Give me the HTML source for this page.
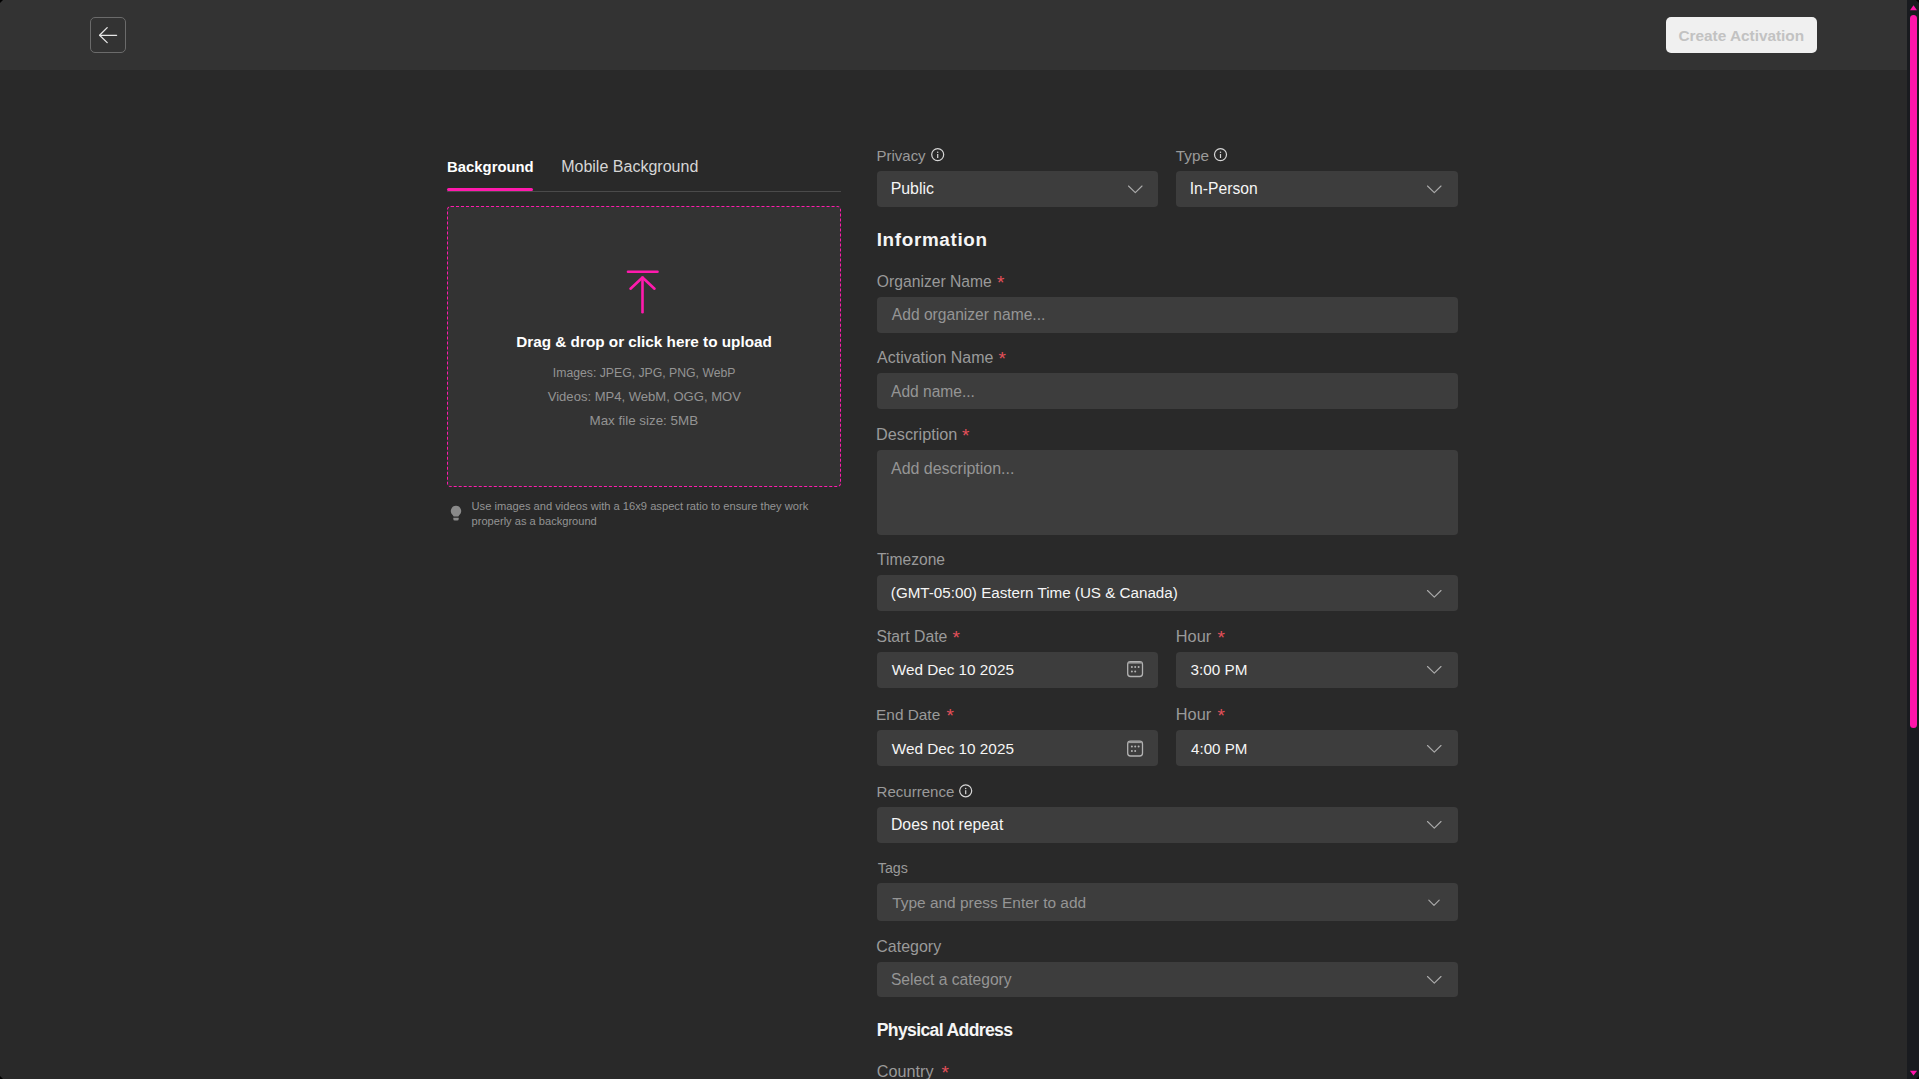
<!DOCTYPE html>
<html>
<head>
<meta charset="utf-8">
<style>
html,body{margin:0;padding:0;background:#292929;}
body{width:1919px;height:1079px;overflow:hidden;background:#292929;position:relative;font-family:"Liberation Sans",sans-serif;}
.abs{position:absolute;}
.t{position:absolute;white-space:nowrap;}
.box{position:absolute;background:#3d3d3d;border-radius:4px;}
svg{position:absolute;left:0;top:0;overflow:visible;}
</style>
</head>
<body>
<div class="abs" style="left:0;top:0;width:1907px;height:70px;background:#333333;"></div>
<!-- back button -->
<div class="abs" style="left:90px;top:17px;width:34px;height:34px;border:1px solid #6b6b6b;border-radius:5px;"></div>
<svg width="1" height="1"><g fill="none" stroke="#e6e6e6" stroke-width="1.3" stroke-linecap="round" stroke-linejoin="round"><path d="M99.6 35.3H116.6"/><path d="M107.2 27.6L99.6 35.3L107.2 42.6"/></g></svg>
<!-- create activation -->
<div class="abs" style="left:1666px;top:17px;width:151px;height:36px;background:#f0f0f0;border-radius:5px;"></div>

<!-- scrollbar -->
<div class="abs" style="left:1907px;top:0;width:12px;height:1079px;background:#191b1f;"></div>
<div class="abs" style="left:1910px;top:15px;width:7px;height:713px;background:#ff14aa;border-radius:3.5px;"></div>
<svg width="1" height="1"><path d="M1913.5 5.3L1917 10.2L1910 10.2Z" fill="#ff14aa"/><path d="M1913.5 1075.6L1917.1 1070.7L1909.9 1070.7Z" fill="#ff14aa"/><path d="M0 1079V1076L3 1079Z" fill="#000"/><path d="M1919 1079V1076L1916 1079Z" fill="#000"/><path d="M0 0H3L0 3Z" fill="#000"/><path d="M1919 0H1916L1919 3Z" fill="#000"/></svg>

<!-- tabs -->
<div class="abs" style="left:447px;top:191px;width:394px;height:1px;background:#4a4a4a;"></div>
<div class="abs" style="left:447px;top:188px;width:86px;height:3px;background:#ff1aad;border-radius:2px;"></div>

<!-- upload -->
<div class="abs" style="left:447px;top:206px;width:392px;height:279px;background:#333333;border:1px dashed #ff1aad;border-radius:4px;"></div>
<svg width="1" height="1"><g fill="none" stroke="#ff1aad" stroke-width="2.6" stroke-linecap="round" stroke-linejoin="round"><path d="M628 271.7H657.5"/><path d="M642.5 277.5V312.3"/><path d="M630.5 288.7L642.5 277.5L654.5 288.7"/></g></svg>
<svg width="1" height="1"><g fill="#8a8a8a"><path d="M456 505.8a5.2 5.2 0 0 1 3.4 9.1c-.7.6-1 1.2-1 1.7h-4.8c0-.5-.3-1.1-1-1.7a5.2 5.2 0 0 1 3.4-9.1z"/><path d="M453.3 517.8h5.4v1.2a1.6 1.6 0 0 1-1.6 1.6h-2.2a1.6 1.6 0 0 1-1.6-1.6z"/></g></svg>

<!-- boxes -->
<div class="box" style="left:877px;top:171px;width:281px;height:36px;"></div>
<div class="box" style="left:1176px;top:171px;width:282px;height:36px;"></div>
<div class="box" style="left:877px;top:297px;width:581px;height:36px;"></div>
<div class="box" style="left:877px;top:373px;width:581px;height:36px;"></div>
<div class="box" style="left:877px;top:450px;width:581px;height:85px;"></div>
<div class="box" style="left:877px;top:575px;width:581px;height:36px;"></div>
<div class="box" style="left:877px;top:652px;width:281px;height:36px;"></div>
<div class="box" style="left:1176px;top:652px;width:282px;height:36px;"></div>
<div class="box" style="left:877px;top:730px;width:281px;height:36px;"></div>
<div class="box" style="left:1176px;top:730px;width:282px;height:36px;"></div>
<div class="box" style="left:877px;top:807px;width:581px;height:36px;"></div>
<div class="box" style="left:877px;top:883px;width:581px;height:38px;"></div>
<div class="box" style="left:877px;top:962px;width:581px;height:35px;"></div>

<!-- info icons -->
<svg width="1" height="1"><g fill="none" stroke="#d6d6d6" stroke-width="1.2"><circle cx="937.7" cy="154.6" r="6"/><circle cx="1220.5" cy="154.6" r="6"/><circle cx="965.7" cy="790.8" r="6"/></g>
<g fill="#d6d6d6"><rect x="937.1" y="154" width="1.2" height="4"/><circle cx="937.7" cy="152.3" r=".75"/>
<rect x="1219.9" y="154" width="1.2" height="4"/><circle cx="1220.5" cy="152.3" r=".75"/>
<rect x="965.1" y="790.2" width="1.2" height="4"/><circle cx="965.7" cy="788.5" r=".75"/></g></svg>

<!-- chevrons -->
<svg width="1" height="1"><g fill="none" stroke="#aaaaaa" stroke-width="1.15" stroke-linecap="round" stroke-linejoin="round">
<path d="M1128.5 186L1135.3 192.7L1142 186"/>
<path d="M1427.5 186L1434.3 192.7L1441 186"/>
<path d="M1427.5 590.5L1434.3 597.2L1441 590.5"/>
<path d="M1427.5 666.5L1434.3 673.2L1441 666.5"/>
<path d="M1427.5 745.5L1434.3 752.2L1441 745.5"/>
<path d="M1427.5 821.5L1434.3 828.2L1441 821.5"/>
<path d="M1428.8 900.2L1434 905.4L1439.2 900.2"/>
<path d="M1427.5 976.5L1434.3 983.2L1441 976.5"/>
</g></svg>
<!-- calendars -->
<svg width="1" height="1"><g fill="none" stroke="#b3b3b3" stroke-width="1.3"><rect x="1127.7" y="661.7" width="14.8" height="14.8" rx="2.8"/><rect x="1127.7" y="741.2" width="14.8" height="14.8" rx="2.8"/></g>
<g fill="#b3b3b3"><rect x="1128.5" y="662" width="13.2" height="1.6" fill="#9a9a9a"/><rect x="1128.5" y="741.5" width="13.2" height="1.6" fill="#9a9a9a"/>
<circle cx="1131.9" cy="667" r="1"/><circle cx="1135.2" cy="667" r="1"/><circle cx="1138.6" cy="667" r="1"/><circle cx="1131.9" cy="671.5" r="1"/><circle cx="1135.2" cy="671.5" r="1"/>
<circle cx="1131.9" cy="746.5" r="1"/><circle cx="1135.2" cy="746.5" r="1"/><circle cx="1138.6" cy="746.5" r="1"/><circle cx="1131.9" cy="751" r="1"/><circle cx="1135.2" cy="751" r="1"/></g></svg>

<div class="t" id="create" style="left:1678.38px;top:26.30px;font-size:15.36px;line-height:20px;color:#c2c2c2;font-weight:700;">Create Activation</div>
<div class="t" id="tab1" style="left:447.08px;top:156.91px;font-size:14.85px;line-height:20px;color:#ffffff;font-weight:700;">Background</div>
<div class="t" id="tab2" style="left:561.13px;top:155.89px;font-size:16.05px;line-height:20px;color:#d6d6d6;">Mobile Background</div>
<div class="t" id="drag" style="left:516.28px;top:332.30px;font-size:15.29px;line-height:20px;color:#ffffff;font-weight:700;">Drag &amp; drop or click here to upload</div>
<div class="t" id="img" style="left:552.82px;top:363.02px;font-size:12.24px;line-height:20px;color:#949494;">Images: JPEG, JPG, PNG, WebP</div>
<div class="t" id="vid" style="left:547.76px;top:387.12px;font-size:13.06px;line-height:20px;color:#949494;">Videos: MP4, WebM, OGG, MOV</div>
<div class="t" id="max" style="left:589.54px;top:411.31px;font-size:13.38px;line-height:20px;color:#949494;">Max file size: 5MB</div>
<div class="t" id="hint1" style="left:471.57px;top:498.89px;font-size:11.17px;line-height:15px;color:#949494;">Use images and videos with a 16x9 aspect ratio to ensure they work</div>
<div class="t" id="hint2" style="left:471.58px;top:513.71px;font-size:11.10px;line-height:15px;color:#949494;">properly as a background</div>
<div class="t" id="privacy" style="left:876.54px;top:146.01px;font-size:14.97px;line-height:20px;color:#9a9a9a;">Privacy</div>
<div class="t" id="public" style="left:890.67px;top:178.92px;font-size:15.88px;line-height:20px;color:#f5f5f5;">Public</div>
<div class="t" id="type" style="left:1175.79px;top:146.01px;font-size:15.30px;line-height:20px;color:#9a9a9a;">Type</div>
<div class="t" id="inperson" style="left:1189.77px;top:179.46px;font-size:15.66px;line-height:20px;color:#f5f5f5;">In-Person</div>
<div class="t" id="info" style="left:876.71px;top:227.50px;font-size:18.85px;line-height:24px;color:#f5f5f5;font-weight:700;letter-spacing:0.664px;">Information</div>
<div class="t" id="org" style="left:876.85px;top:271.83px;font-size:15.68px;line-height:20px;color:#9a9a9a;">Organizer Name</div>
<div class="t" id="orgph" style="left:891.80px;top:304.79px;font-size:15.62px;line-height:20px;color:#959595;">Add organizer name...</div>
<div class="t" id="act" style="left:877.07px;top:347.96px;font-size:15.98px;line-height:20px;color:#9a9a9a;">Activation Name</div>
<div class="t" id="actph" style="left:891.02px;top:381.76px;font-size:15.57px;line-height:20px;color:#959595;">Add name...</div>
<div class="t" id="desc" style="left:876.10px;top:423.97px;font-size:16.25px;line-height:20px;color:#9a9a9a;">Description</div>
<div class="t" id="descph" style="left:891.00px;top:458.96px;font-size:15.97px;line-height:20px;color:#959595;">Add description...</div>
<div class="t" id="tz" style="left:877.12px;top:549.97px;font-size:15.60px;line-height:20px;color:#9a9a9a;">Timezone</div>
<div class="t" id="tzv" style="left:890.85px;top:583.30px;font-size:15.20px;line-height:20px;color:#f5f5f5;">(GMT-05:00) Eastern Time (US &amp; Canada)</div>
<div class="t" id="sd" style="left:876.42px;top:626.87px;font-size:15.77px;line-height:20px;color:#9a9a9a;">Start Date</div>
<div class="t" id="sdv" style="left:891.72px;top:660.01px;font-size:15.31px;line-height:20px;color:#f5f5f5;">Wed Dec 10 2025</div>
<div class="t" id="h1" style="left:1175.81px;top:625.94px;font-size:16.33px;line-height:20px;color:#9a9a9a;">Hour</div>
<div class="t" id="h1v" style="left:1190.55px;top:659.80px;font-size:15.27px;line-height:20px;color:#f5f5f5;">3:00 PM</div>
<div class="t" id="ed" style="left:876.09px;top:704.95px;font-size:15.39px;line-height:20px;color:#9a9a9a;">End Date</div>
<div class="t" id="edv" style="left:891.72px;top:738.72px;font-size:15.31px;line-height:20px;color:#f5f5f5;">Wed Dec 10 2025</div>
<div class="t" id="h2" style="left:1175.81px;top:703.94px;font-size:16.33px;line-height:20px;color:#9a9a9a;">Hour</div>
<div class="t" id="h2v" style="left:1191.10px;top:738.72px;font-size:15.12px;line-height:20px;color:#f5f5f5;">4:00 PM</div>
<div class="t" id="rec" style="left:876.54px;top:781.92px;font-size:15.05px;line-height:20px;color:#9a9a9a;">Recurrence</div>
<div class="t" id="recv" style="left:890.98px;top:815.00px;font-size:15.79px;line-height:20px;color:#f5f5f5;">Does not repeat</div>
<div class="t" id="tags" style="left:877.78px;top:858.17px;font-size:14.26px;line-height:20px;color:#9a9a9a;">Tags</div>
<div class="t" id="tagsph" style="left:892.17px;top:893.01px;font-size:15.44px;line-height:20px;color:#959595;">Type and press Enter to add</div>
<div class="t" id="cat" style="left:876.32px;top:937.13px;font-size:15.99px;line-height:20px;color:#9a9a9a;">Category</div>
<div class="t" id="catph" style="left:890.96px;top:970.01px;font-size:15.62px;line-height:20px;color:#959595;">Select a category</div>
<div class="t" id="phys" style="left:876.74px;top:1017.81px;font-size:17.60px;line-height:24px;color:#f5f5f5;font-weight:700;letter-spacing:-0.652px;">Physical Address</div>
<div class="t" id="country" style="left:876.84px;top:1060.98px;font-size:16.21px;line-height:20px;color:#9a9a9a;">Country</div>
<div class="t" id="r_org" style="left:996.94px;top:273.22px;font-size:19px;line-height:20px;color:#e3505a;">*</div>
<div class="t" id="r_act" style="left:998.45px;top:349.42px;font-size:19px;line-height:20px;color:#e3505a;">*</div>
<div class="t" id="r_desc" style="left:961.90px;top:426.42px;font-size:19px;line-height:20px;color:#e3505a;">*</div>
<div class="t" id="r_sd" style="left:952.62px;top:627.92px;font-size:19px;line-height:20px;color:#e3505a;">*</div>
<div class="t" id="r_h1" style="left:1217.39px;top:627.92px;font-size:19px;line-height:20px;color:#e3505a;">*</div>
<div class="t" id="r_ed" style="left:946.45px;top:705.92px;font-size:19px;line-height:20px;color:#e3505a;">*</div>
<div class="t" id="r_h2" style="left:1217.39px;top:705.92px;font-size:19px;line-height:20px;color:#e3505a;">*</div>
<div class="t" id="r_country" style="left:941.45px;top:1063.42px;font-size:19px;line-height:20px;color:#e3505a;">*</div>
</body>
</html>
